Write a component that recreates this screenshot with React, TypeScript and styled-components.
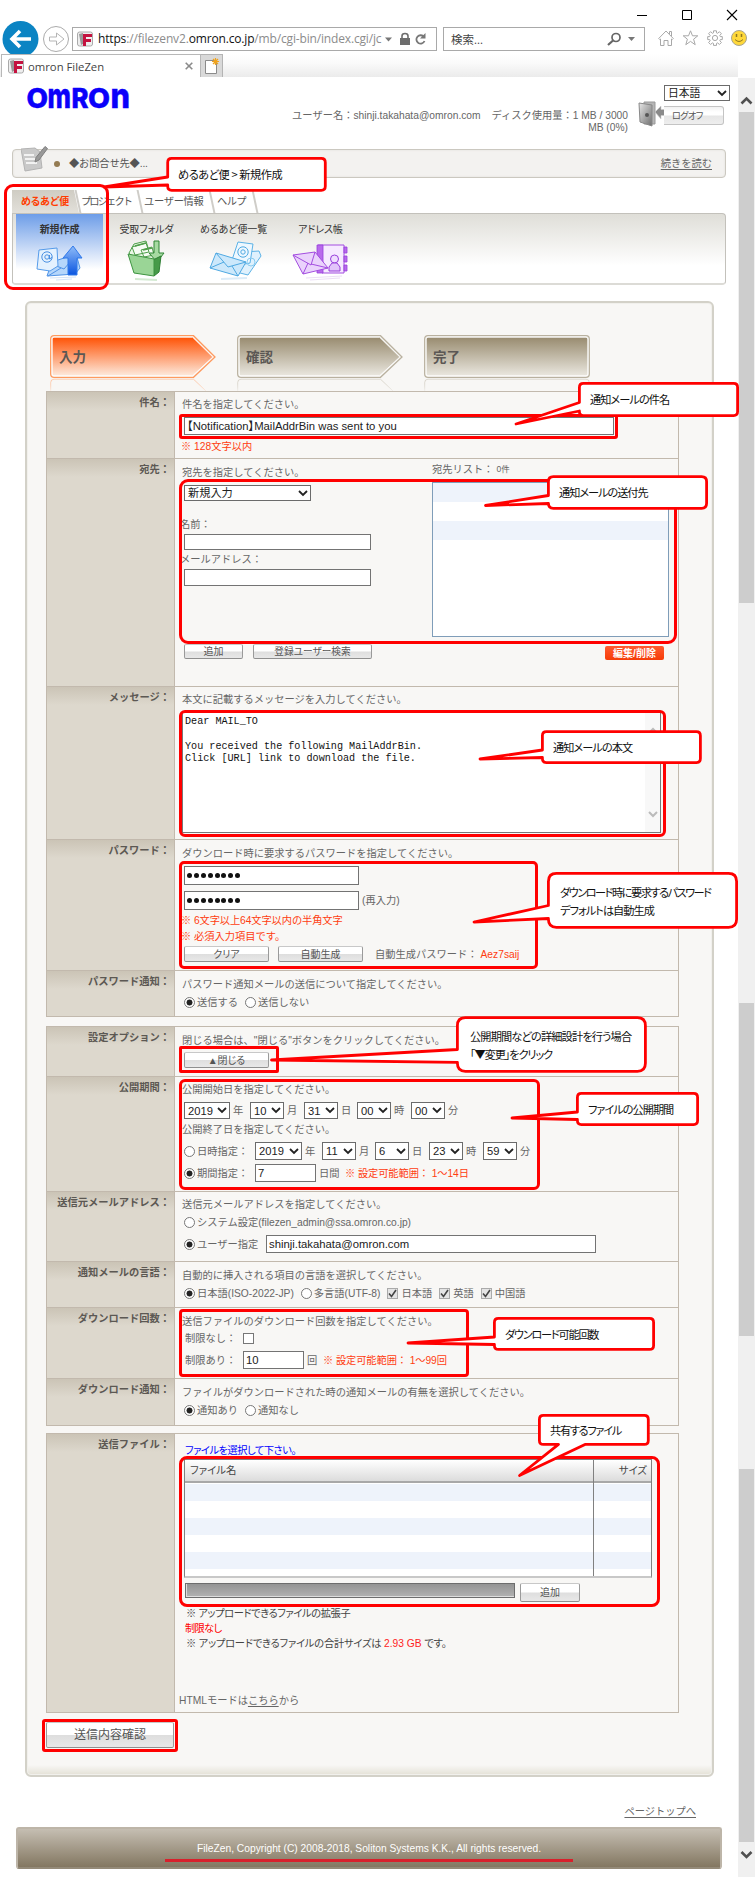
import React from "react";
import styled, { createGlobalStyle, css } from "styled-components";

const Global = createGlobalStyle`
  html, body { margin: 0; padding: 0; background: #fff; }
  *, *::before, *::after { box-sizing: border-box; }
`;

const sans = `"Liberation Sans", "Noto Sans CJK JP", sans-serif`;
const ui = `"Open Sans", "Noto Sans CJK JP", sans-serif`;

const Root = styled.div`
  position: relative;
  width: 756px;
  height: 1877px;
  overflow: hidden;
  background: #fff;
  font-family: ${sans};
  font-size: 10.25px;
  line-height: 13px;
  color: #666;
`;

/* ---------- browser frame ---------- */
const Chrome = styled.header`
  height: 77px;
  display: flex;
  flex-direction: column;
`;
const WindowButtons = styled.div`
  height: 27px;
  padding: 9px 18px 0 0;
  display: flex;
  justify-content: flex-end;
  gap: 33px;
`;
const AddressRow = styled.div`
  height: 27px;
  display: flex;
  align-items: flex-start;
`;
const NavButtons = styled.svg`
  display: block;
  flex: none;
  margin-top: -7px;
`;
const BarBox = styled.div<{ $w: number; $ml?: number; $pr?: number }>`
  flex: none;
  width: ${(p) => p.$w}px;
  height: 24px;
  margin-left: ${(p) => p.$ml || 0}px;
  border: 1px solid #a9a9a9;
  display: flex;
  align-items: center;
  padding: 0 ${(p) => p.$pr || 6}px 0 4px;
  background: #fff;
  font-family: ${ui};
  color: #8c8c8c;
`;
const Url = styled.div`
  width: 286px;
  margin-left: 5px;
  overflow: hidden;
  white-space: nowrap;
  font-size: 12px;
  letter-spacing: -0.16px;
  line-height: 20px;
  b { font-weight: 400; color: #111; }
`;
const SearchText = styled.div`
  flex: 1;
  padding-left: 3px;
  font-size: 11.5px;
  color: #444;
`;
const CaretGap = styled.div`
  display: flex;
  margin-left: 6px;
`;
const ToolIcons = styled.div`
  display: flex;
  gap: 8px;
  padding: 3px 0 0 13px;
`;
const TabRow = styled.div`
  height: 23px;
  display: flex;
  padding-left: 1px;
  background: linear-gradient(#fff, #fafafa 40%, #ebebeb);
  border-right: 18px solid #fff;
`;
const BrowserTab = styled.div`
  width: 200px;
  padding: 0 7px 0 6px;
  display: flex;
  align-items: center;
  background: #fff;
  border: 1px solid #b8b8b8;
  border-bottom: 0;
  font-family: ${ui};
  font-size: 11.3px;
  color: #444;
  span { flex: 1; margin-left: 4px; }
`;
const NewTab = styled.div`
  width: 22px;
  border: 1px solid #b4b4b4;
  border-left: 0;
  border-bottom: 0;
  background: #d9d9d9;
  padding: 2px 0 0 4px;
`;
const Favicon = () => (
  <svg width="16" height="16" viewBox="0 0 16 16">
    <rect x=".5" y="1" width="15" height="14" rx="2" fill="#eee" stroke="#aaa" />
    <path d="M2 3l4-1v11l-2 1z" fill="#999" />
    <path d="M6 3h9v3H9v2h5v3H9v4H6z" fill="#c4123f" />
  </svg>
);

/* ---------- page ---------- */
const Body = styled.div`
  display: flex;
  height: 1800px;
`;
const Page = styled.main`
  width: 738px;
  display: flex;
  flex-direction: column;
`;
const Scrollbar = styled.aside`
  width: 17px;
  background: #f0f0f0;
  margin-top: 1px;
  padding: 16px 1px 0;
  display: flex;
  flex-direction: column;
  > * { flex: none; display: block; }
`;
const Thumb = styled.div<{ $mt: number; $h: number }>`
  margin-top: ${(p) => p.$mt}px;
  height: ${(p) => p.$h}px;
  background: #cdcdcd;
`;

const Header = styled.div`
  height: 72px;
  display: flex;
  padding-left: 27px;
`;
const Logo = styled.svg`
  flex: none;
  overflow: visible;
  font-family: Inter, sans-serif;
  font-weight: 800;
`;
const UserInfo = styled.div`
  margin: 33px 0 0 149px;
  width: 349px;
  text-align: right;
  line-height: 12px;
  font-size: 10.25px;
  white-space: nowrap;
  span { margin-right: 8px; }
`;
const HeaderTools = styled.div`
  width: 95px;
  margin: 8px 0 0 10px;
  display: flex;
  flex-direction: column;
`;
const Logoff = styled.div`
  height: 26px;
  display: flex;
  align-items: center;
`;
const LogoffLabel = styled.div`
  width: 60px;
  height: 19px;
  margin: 3px 0 0 -3px;
  padding-left: 8px;
  border: 1px solid #c4c4c4;
  border-width: 1px 1px 1px 0;
  border-radius: 0 3px 3px 0;
  background: linear-gradient(#f2f2f2, #fff 30%, #fff 48%, #e6e6e6 52%, #eee);
  line-height: 18px;
  color: #555;
  font-feature-settings: "palt";
  font-size: 9.2px;
  letter-spacing: -0.7px;
`;

const Notice = styled.div`
  width: 714px;
  height: 29px;
  margin-left: 12px;
  padding: 0 13px 0 8px;
  display: flex;
  align-items: center;
  border: 1px solid #cbc8c0;
  border-radius: 4px;
  background: #f3f2f0;
  box-shadow: inset 0 0 2px #dedbd4;
  > svg { margin-top: -10px; }
`;
const Bullet = styled.i`
  width: 6px;
  height: 6px;
  margin: 0 9px 0 6px;
  border-radius: 50%;
  background: #947b52;
`;
const Link = styled.a`
  text-decoration: underline;
  text-underline-offset: 2px;
`;
const NoticeText = styled.span`
  flex: 1;
  color: #555;
  letter-spacing: -0.15px;
`;

const TabStrip = styled.nav`
  height: 23px;
  margin: 12px 0 0 12px;
  display: flex;
`;
const SectionTab = styled.div<{ $w: number; $pad: number; $active?: boolean; $ls?: number }>`
  width: ${(p) => p.$w}px;
  padding-left: ${(p) => p.$pad}px;
  line-height: 23px;
  white-space: nowrap;
  color: ${(p) => (p.$active ? "#ff3c00" : "#555")};
  font-weight: ${(p) => (p.$active ? 700 : 400)};
  font-size: ${(p) => (p.$active ? 10 : 10.25)}px;
  letter-spacing: ${(p) => p.$ls || 0}px;
  ${(p) => p.$active && css`
    background: linear-gradient(#cfccc3, #e2e0da);
    clip-path: polygon(0 0, 62px 0, 67px 100%, 0 100%);
  `}
`;
const Slant = styled.i`
  width: 2px;
  height: 23px;
  margin: 0 0 0 -2px;
  background: #cfcdc8;
  transform: skewX(12deg);
`;
const NavPanel = styled.div`
  width: 714px;
  height: 72px;
  margin-left: 12px;
  padding-left: 3px;
  display: flex;
  border: 1px solid #c3c1bb;
  border-bottom: 2px solid #dcdbd6;
  border-radius: 0 4px 4px 4px;
  background: linear-gradient(#dfded8, #fff 75%);
`;
const NavItem = styled.div<{ $active?: boolean }>`
  width: 87px;
  display: flex;
  flex-direction: column;
  align-items: center;
  padding-top: 9px;
  font-size: 10px;
  color: #333;
  white-space: nowrap;
  font-feature-settings: "palt";
  letter-spacing: -0.1px;
  ${(p) => p.$active && css`
    font-weight: 700;
    background: linear-gradient(#6d9de8, #fff 80%);
  `}
  svg { margin-top: 5px; overflow: visible; }
`;

const Panel = styled.section`
  width: 689px;
  height: 1476px;
  margin: 16px 0 0 25px;
  padding: 32px 0 0 19px;
  border: 2px solid #d3d1c8;
  border-radius: 6px;
  background: linear-gradient(#f8f7f5 1462px, #e4e1d6);
  box-shadow: inset 0 0 0 1px #f1f0ec;
`;
const Steps = styled.div`
  height: 56px;
  padding-left: 4px;
  display: flex;
  gap: 21px;
`;
const StepBox = styled.div`
  width: 166px;
  display: grid;
  > * { grid-area: 1 / 1; }
`;
const StepLabel = styled.span`
  padding: 14px 0 0 9px;
  z-index: 1;
  font-size: 13.5px;
  line-height: 18px;
  font-weight: 700;
  color: #5b5754;
`;

const Sheet = styled.div<{ $mt?: number }>`
  width: 633px;
  margin-top: ${(p) => p.$mt || 0}px;
  border: 1px solid #c2b9ad;
  border-top: 0;
`;
const RowBox = styled.div<{ $h: number }>`
  height: ${(p) => p.$h}px;
  display: grid;
  grid-template-columns: 128px 1fr;
  border-top: 1px solid #c2b9ad;
`;
const Label = styled.div`
  padding: 4px 4px 0 0;
  text-align: right;
  font-weight: 700;
  color: #5c5853;
  border-right: 1px solid #c2b9ad;
  background: linear-gradient(#cbc4b6, #ddd8cd 18px);
`;
const Cell = styled.div`
  padding-left: 7px;
  min-width: 0;
  white-space: nowrap;
`;
const Line = styled.div<{ $mt: number; $h?: number; $indent?: number }>`
  margin-top: ${(p) => p.$mt}px;
  height: ${(p) => p.$h || 13}px;
  padding-left: ${(p) => p.$indent || 0}px;
  display: flex;
  align-items: center;
`;
const Warn = styled.span<{ $ml?: number; $ls?: number }>`
  margin-left: ${(p) => p.$ml || 0}px;
  letter-spacing: ${(p) => p.$ls || 0}px;
  color: #ff3d10;
`;
const Outdent = styled.span`
  margin-left: -2px;
`;
const Field = styled.div<{ $w: number; $size?: number }>`
  flex: none;
  width: ${(p) => p.$w}px;
  height: 100%;
  padding: 0 0 0 2px;
  display: flex;
  align-items: center;
  border: 1px solid #737373;
  background: #fff;
  color: #222;
  font-size: ${(p) => p.$size || 11.3}px;
  font-feature-settings: "palt";
`;
const SelectBox = styled.div<{ $w: number; $size?: number }>`
  flex: none;
  width: ${(p) => p.$w}px;
  height: 100%;
  min-height: 16px;
  padding: 0 2px 0 3px;
  display: flex;
  align-items: center;
  justify-content: space-between;
  border: 1px solid #6b6b6b;
  background: #fff;
  color: #222;
  font-size: ${(p) => p.$size || 11.2}px;
  line-height: 14px;
`;
const Select = ({ w, size, children }: { w: number; size?: number; children: React.ReactNode }) => (
  <SelectBox $w={w} $size={size}>
    {children}
    <svg width="10" height="7" viewBox="0 0 10 7"><path d="M1 1l4 4 4-4" fill="none" stroke="#222" strokeWidth="1.8" /></svg>
  </SelectBox>
);
const Unit = styled.span<{ $w: number }>`
  flex: none;
  width: ${(p) => p.$w}px;
  padding-left: 3px;
`;
const Button = styled.div<{ $w: number; $ml?: number; $size?: number; $hot?: boolean }>`
  flex: none;
  width: ${(p) => p.$w}px;
  height: 100%;
  margin-left: ${(p) => p.$ml || 0}px;
  display: flex;
  align-items: center;
  justify-content: center;
  border: 1px solid #b0b0b0;
  border-color: #c8c8c8 #9a9a9a #8f8f8f #9a9a9a;
  border-radius: 2px;
  background: linear-gradient(#fff 48%, #dedede 52%, #e8e8e8);
  color: #555;
  font-size: ${(p) => p.$size || 10}px;
  font-feature-settings: "palt";
  ${(p) => p.$hot && css`
    border: 0;
    background: linear-gradient(#ff5a30, #f63c08);
    color: #fff;
    font-weight: 700;
  `}
`;
const Radio = styled.i<{ $on?: boolean; $ml?: number }>`
  flex: none;
  width: 11px;
  height: 11px;
  margin: 0 2px 0 ${(p) => p.$ml || 0}px;
  border: 1px solid #777;
  border-radius: 50%;
  background: ${(p) => (p.$on ? "radial-gradient(circle, #222 0 2.7px, #fff 3.3px)" : "#fff")};
`;
const Check = styled.i<{ $ml?: number; $dim?: boolean }>`
  flex: none;
  width: 11px;
  height: 11px;
  margin: 0 3px 0 ${(p) => p.$ml || 0}px;
  border: 1px solid ${(p) => (p.$dim ? "#aaa" : "#777")};
  background: ${(p) => (p.$dim ? "#e4e4e4" : "#fff")};
  display: block;
  svg { display: block; }
`;
const Ticked = ({ ml }: { ml: number }) => (
  <Check $ml={ml} $dim><svg width="9" height="9" viewBox="0 0 9 9"><path d="M1 4.5l2.5 3L8 1" fill="none" stroke="#444" strokeWidth="1.6" /></svg></Check>
);
const Fixed = styled.span<{ $w: number }>`
  flex: none;
  width: ${(p) => p.$w}px;
`;
const Dots = styled.div`
  display: flex;
  gap: 1.9px;
  i { width: 5px; height: 5px; border-radius: 50%; background: #111; }
`;
const Password = () => (
  <Field $w={175}><Dots>{Array.from({ length: 8 }, (_, i) => <i key={i} />)}</Dots></Field>
);
const Split = styled.div`
  display: grid;
  grid-template-columns: 250px 237px;
`;
const Recipients = styled.div`
  height: 155px;
  margin-top: 6px;
  border: 1px solid #7f9db9;
  background: linear-gradient(#eef3fb 19px, #fff 19px 38px, #eef3fb 38px 57px, #fff 57px);
`;
const Small = styled.span`
  font-size: 8.5px;
  margin-left: 3px;
`;
const MessageBox = styled.div`
  width: 479px;
  height: 121px;
  margin-top: 6px;
  border: 1px solid #777;
  display: flex;
  justify-content: space-between;
  background: #fff;
  color: #111;
`;
const MessageText = styled.pre`
  margin: 3px 0 0 2px;
  font: 10.13px/12.4px "Liberation Mono", monospace;
`;
const MiniScroll = styled.div`
  width: 15px;
  background: #f8f8f8;
  display: flex;
  flex-direction: column;
  justify-content: space-between;
  align-items: center;
  padding: 14px 0;
`;
const Dense = styled.span<{ $c?: string; $ls?: number }>`
  font-feature-settings: "palt";
  color: ${(p) => p.$c || "#444"};
  letter-spacing: ${(p) => p.$ls || 0}px;
`;
const FileTable = styled.div`
  width: 468px;
  height: 119px;
  margin: 2px 0 0 2px;
  display: grid;
  grid-template-columns: 408px 1fr;
  border: 1px solid #808080;
  border-bottom: 2px solid #c8c8c8;
`;
const FileCol = styled.div<{ $right?: boolean }>`
  border-left: ${(p) => (p.$right ? "1px solid #808080" : "0")};
  text-align: ${(p) => (p.$right ? "right" : "left")};
  background: linear-gradient(#eef3fb 17px, #fff 17px 34px, #eef3fb 34px 51px, #fff 51px 68px, #eef3fb 68px 85px, #fff 85px) 0 24px no-repeat #fff;
`;
const FileHead = styled.div`
  height: 23px;
  padding: 0 4px 0 5px;
  line-height: 22px;
  border-bottom: 2px solid #a8a8a8;
  background: linear-gradient(#fff, #dcdcdc);
  color: #444;
  font-size: 10.4px;
  font-feature-settings: "palt";
`;
const Progress = styled.div`
  width: 330px;
  height: 15px;
  align-self: flex-start;
  border: 1px solid #6d6d6d;
  box-shadow: inset 1px -1px 0 #ddd;
  background: linear-gradient(#949494, #b2b2b2);
`;
const HtmlMode = styled.span`
  margin-left: -3px;
`;
const Submit = styled.div`
  display: flex;
  height: 26px;
  margin-top: 9px;
`;
const TopLink = styled.div`
  height: 13px;
  margin: 28px 42px 9px 0;
  text-align: right;
`;
const Footer = styled.footer`
  width: 706px;
  height: 42px;
  margin-left: 16px;
  padding-top: 1px;
  display: flex;
  align-items: center;
  justify-content: center;
  border: 2px solid #bdb5a8;
  border-bottom-color: #948a78;
  border-radius: 3px;
  background: linear-gradient(#c5beb2, #837761);
  color: #fff;
  font-size: 10.25px;
`;

/* ---------- annotations ---------- */
const Mark = styled.div<{ $b: [number, number, number, number]; $r: number }>`
  position: absolute;
  left: ${(p) => p.$b[0]}px;
  top: ${(p) => p.$b[1]}px;
  width: ${(p) => p.$b[2] - p.$b[0]}px;
  height: ${(p) => p.$b[3] - p.$b[1]}px;
  border: 3px solid #f00;
  border-radius: ${(p) => p.$r}px;
`;
const Bubbles = styled.svg`
  position: absolute;
  left: 0;
  top: 0;
`;
const BubbleText = styled.div<{ $x: number; $y: number; $ls: number }>`
  position: absolute;
  left: ${(p) => p.$x}px;
  top: ${(p) => p.$y - 9}px;
  line-height: 18px;
  font-family: "Noto Sans CJK JP", sans-serif;
  font-size: 11.2px;
  font-feature-settings: "palt";
  letter-spacing: ${(p) => p.$ls}px;
  color: #111;
  white-space: pre;
`;
const Underline = styled.div`
  position: absolute;
  left: 165px;
  top: 1859px;
  width: 408px;
  height: 3px;
  background: #d8202c;
`;

type Callout = {
  box: [number, number, number, number];
  tip: [number, number];
  base: [number, number];
  bottom?: boolean;
  r: number;
  lines: [string, number][];
  at: [number, number];
};
const callouts: Callout[] = [
  { box: [167.7, 158.4, 325.3, 190.3], tip: [104, 187], base: [177, 185], r: 4, lines: [["めるあど便 > 新規作成", -0.45]], at: [178, 174] },
  { box: [579.4, 383.4, 737.6, 415.6], tip: [516, 424], base: [402.5, 411], r: 4, lines: [["通知メールの件名", -0.95]], at: [590, 399] },
  { box: [548.4, 476.7, 706.6, 508.3], tip: [485.5, 505.5], base: [495.5, 503.5], r: 5, lines: [["通知メールの送付先", -1.05]], at: [559, 492] },
  { box: [542.4, 731.7, 700.4, 762.6], tip: [480, 759], base: [750, 757.5], r: 4, lines: [["通知メールの本文", -0.95]], at: [553, 747] },
  { box: [548.4, 873.4, 736.6, 927.3], tip: [474, 922], base: [905.5, 918.5], r: 8, lines: [["ダウンロード時に要求するパスワード", -1.5], ["デフォルトは自動生成", -0.95]], at: [560, 892] },
  { box: [457.4, 1017.7, 645.4, 1071.3], tip: [271.5, 1060], base: [1049.5, 1062.3], r: 8, lines: [["公開期間などの詳細設計を行う場合", -0.85], ["「▼変更」をクリック", -1.1]], at: [470, 1036] },
  { box: [577.4, 1093.4, 697.6, 1124.6], tip: [512, 1118], base: [1112, 1119.5], r: 4, lines: [["ファイルの公開期間", -1]], at: [588, 1109] },
  { box: [494.4, 1318.4, 653.6, 1349.4], tip: [408, 1343], base: [1337, 1344.5], r: 4, lines: [["ダウンロード可能回数", -1.25]], at: [505, 1334] },
  { box: [539.4, 1415.4, 648.3, 1444.4], tip: [519.5, 1475.5], base: [558.5, 585], bottom: true, r: 4, lines: [["共有するファイル", -1.3]], at: [550, 1430] },
];
const bubblePath = ({ box: [l, t, r, b], tip, base, bottom, r: q }: Callout) =>
  `M${l + q} ${t}H${r - q}Q${r} ${t} ${r} ${t + q}V${b - q}Q${r} ${b} ${r - q} ${b}` +
  (bottom ? `H${base[1]}L${tip[0]} ${tip[1]}L${base[0]} ${b}` : "") +
  `H${l + q}Q${l} ${b} ${l} ${b - q}` +
  (bottom ? "" : `V${base[1]}L${tip[0]} ${tip[1]}L${l} ${base[0]}`) +
  `V${t + q}Q${l} ${t} ${l + q} ${t}Z`;

const marks: { b: [number, number, number, number]; r: number }[] = [
  { b: [4, 184, 109, 290], r: 9 },
  { b: [179, 414, 618, 439], r: 3 },
  { b: [179, 479, 677, 644], r: 9 },
  { b: [179, 710, 666, 837], r: 6 },
  { b: [179, 861, 538, 969], r: 5 },
  { b: [179, 1046, 279, 1073], r: 2 },
  { b: [179, 1079, 540, 1190], r: 6 },
  { b: [179, 1309, 469, 1377], r: 4 },
  { b: [179, 1456, 660, 1607], r: 8 },
  { b: [42, 1719, 178, 1752], r: 3 },
];

/* ---------- small pieces ---------- */
const Step = ({ id, label, top, low, line, arrow }: { id: string; label: string; top: string; low: string; line: string; arrow?: boolean }) => {
  const d = arrow ? "M4 .7H143.5L165 22L143.5 42.3H4Q.7 42.3 .7 39V4Q.7 .7 4 .7Z" : "M4 .7H162Q165.3 .7 165.3 4V39Q165.3 42.3 162 42.3H4Q.7 42.3 .7 39V4Q.7 .7 4 .7Z";
  const inner = arrow ? "M4 2.2H142.6L162.8 22L142.6 40.8H4Q2.2 40.8 2.2 39V4Q2.2 2.2 4 2.2Z" : "M4 2.2H162Q163.8 2.2 163.8 4V39Q163.8 40.8 162 40.8H4Q2.2 40.8 2.2 39V4Q2.2 2.2 4 2.2Z";
  return (
    <StepBox>
      <svg width="166" height="56" viewBox="0 0 166 56">
        <defs>
          <linearGradient id={id} x2="0" y2="1"><stop stopColor={top} /><stop offset="1" stopColor={low} /></linearGradient>
          <linearGradient id={id + "f"} x2="0" y2="1"><stop offset=".68" stopColor="#f8f7f5" /><stop offset="1" stopColor={line} stopOpacity=".45" /></linearGradient>
        </defs>
        <path d={d} fill="none" stroke={`url(#${id}f)`} transform="translate(0 86.5) scale(1 -1)" />
        <path d={d} fill="#f8f7f5" stroke={line} strokeWidth="1.3" />
        <path d={inner} fill={`url(#${id})`} stroke="#fff" strokeOpacity=".85" />
      </svg>
      <StepLabel>{label}</StepLabel>
    </StepBox>
  );
};
const Row = ({ h, label, children }: { h: number; label: string; children: React.ReactNode }) => (
  <RowBox $h={h}>
    <Label>{label}：</Label>
    <Cell>{children}</Cell>
  </RowBox>
);

const IconCompose = () => (
  <svg width="48" height="40" viewBox="0 0 48 40">
    <defs><linearGradient id="up" x2="0" y2="1"><stop stopColor="#8fbcf8" /><stop offset="1" stopColor="#0b55e0" /></linearGradient></defs>
    <path d="M16 21l24-8 4 14-5 6-28 2z" fill="#b5d6fb" stroke="#4f92e6" />
    <path d="M13 22l15 6 12-14M12 35l13-8" fill="none" stroke="#4f92e6" />
    <path d="M3 9l18-2 1 18-8 5-13-2z" fill="#e4f1fe" stroke="#559bea" />
    <circle cx="11" cy="16" r="5.200" fill="none" stroke="#4a90e2" /><path d="M13.500 14v4q2 0 2-2" fill="none" stroke="#4a90e2" /><circle cx="11" cy="16" r="2.200" fill="none" stroke="#4a90e2" />
    <path d="M37 5l9 12h-5v17h-9V17h-5z" fill="url(#up)" stroke="#2f78ea" />
    <path d="M14 37l26-1M20 39l16-1" stroke="#d5e4f8" />
  </svg>
);
const IconFolder = () => (
  <svg width="48" height="40" viewBox="0 0 48 40">
    <path d="M6 12l5-9 12-3 3 10 9 2-1 14-20-4z" fill="#eaf7e6" stroke="#4f9f4b" />
    <path d="M9 6l14-4 3 9-14 3zM18 9l11-3 2 8-10 2z" fill="#f6fcf4" stroke="#4f9f4b" />
    <path d="M12 5l11-3M20 9l9-2" stroke="#4f9f4b" strokeWidth="1.600" />
    <path d="M31 0h5v12h5l-7 9-8-9h5z" fill="#a6daa2" stroke="#2f8434" />
    <path d="M30 19l8-4-2 16-5 4z" fill="#469a48" stroke="#2f7f34" />
    <path d="M5 13l26 5v17l-20-3z" fill="#9ad596" stroke="#3d9440" />
    <path d="M12 38l22 1" stroke="#d4ead2" strokeWidth="2" />
  </svg>
);
const IconMails = () => (
  <svg width="54" height="40" viewBox="0 0 54 40">
    <path d="M36 11l16-1 2 5-13 19-12-3z" fill="#dff1fd" stroke="#5cb2e6" />
    <path d="M31 1l15 2-3 19-10 2-8-5z" fill="#eef8ff" stroke="#5cb2e6" />
    <circle cx="36" cy="11" r="5.200" fill="none" stroke="#4fa9e2" /><circle cx="36" cy="11" r="2.200" fill="none" stroke="#4fa9e2" />
    <circle cx="44" cy="21" r="4" fill="none" stroke="#8accf0" />
    <path d="M9 12l30 9-8 14L3 27z" fill="#cce8fb" stroke="#4fa9e2" />
    <path d="M9 12l12 14 18-5M3 27l14-6M31 35l-6-10" fill="none" stroke="#4fa9e2" />
    <path d="M14 38l26-1" stroke="#dcecf8" strokeWidth="2" />
  </svg>
);
const IconBook = () => (
  <svg width="58" height="40" viewBox="0 0 58 40">
    <path d="M26 4h26v28H30z" fill="#f6eaff" stroke="#a34de0" />
    <path d="M25 4h6v28h-6zM52 6h3v6h-3zm0 9h3v6h-3zm0 9h3v6h-3z" fill="#b86aec" stroke="#983fda" strokeWidth=".8" />
    <circle cx="42.500" cy="18" r="4" fill="#efdcff" stroke="#983fda" />
    <path d="M37 30v-4l3-4h5l3 4v4z" fill="#e2c4fa" stroke="#983fda" />
    <path d="M1 14l22-3 13 16-25 6z" fill="#ead2fc" stroke="#a34de0" />
    <path d="M1 14l18 10 4-13M11 33l5-11M36 27l-17-4" fill="none" stroke="#a34de0" />
    <path d="M14 37l36-2M18 39l30-2" stroke="#ecdff6" />
  </svg>
);
const Caret = () => <svg width="7" height="4" viewBox="0 0 7 4"><path d="M0 0h7L3.500 4z" fill="#777" /></svg>;

export default function App() {
  return (
    <Root>
      <Global />
      <Chrome>
        <WindowButtons>
          <svg width="12" height="12"><path d="M1 6.500h10" stroke="#000" /></svg>
          <svg width="12" height="12"><path d="M1.500 1.500h9v9h-9z" fill="none" stroke="#000" /></svg>
          <svg width="12" height="12"><path d="M1 1l10 10M11 1L1 11" stroke="#000" strokeWidth="1.100" /></svg>
        </WindowButtons>
        <AddressRow>
          <NavButtons width="72" height="34" viewBox="0 20 72 34">
            <circle cx="20.500" cy="39" r="18" fill="#0b84c3" />
            <path d="M31 39H12.500M20 31l-8 8 8 8" fill="none" stroke="#fff" strokeWidth="3.600" />
            <circle cx="56" cy="39" r="12.500" fill="#fff" stroke="#ababab" />
            <path d="M49.500 37h7v-4l7.500 6-7.500 6v-4h-7z" fill="#fff" stroke="#b5b5b5" />
          </NavButtons>
          <BarBox $w={365}>
            <Favicon />
            <Url><b>https</b>://filezenv2.<b>omron.co.jp</b>/mb/cgi-bin/index.cgi/jc</Url>
            <svg width="42" height="14" viewBox="0 0 42 14">
              <path d="M1 5.500h7l-3.500 4z" fill="#777" />
              <rect x="16" y="6" width="10" height="7" fill="#6d6d6d" /><path d="M18 7V4q0-2.500 3-2.500T24 4v3" fill="none" stroke="#6d6d6d" strokeWidth="1.600" />
              <path d="M40 5a4.200 4.200 0 1 0 .5 4" fill="none" stroke="#777" strokeWidth="1.800" /><path d="M41.500 1v5.500H36z" fill="#777" />
            </svg>
          </BarBox>
          <BarBox $w={202} $ml={6} $pr={9}>
            <SearchText>検索...</SearchText>
            <svg width="15" height="14" viewBox="0 0 15 14"><circle cx="9" cy="5.500" r="4" fill="none" stroke="#666" strokeWidth="1.700" /><path d="M6 8.500L1 13" stroke="#666" strokeWidth="2.200" /></svg>
            <CaretGap><Caret /></CaretGap>
          </BarBox>
          <ToolIcons>
            <svg width="16" height="16" viewBox="0 0 16 16" fill="#fff" stroke="#a8a8a8"><path d="M.7 8.500L8 1l7.300 7.500-1 1L13.500 9v6.500h-3.500v-5H6v5H2.500V9l-.8.500zM11.500 4V1.500h2V6" /></svg>
            <svg width="17" height="16" viewBox="0 0 17 16" fill="#fff" stroke="#a8a8a8"><path d="M8.500.8l2 5h5.300l-4.200 3.400 1.600 5.500-4.700-3.300-4.700 3.300 1.600-5.500L1.200 5.800h5.300z" /></svg>
            <svg width="16" height="16" viewBox="0 0 16 16" fill="none" stroke="#a8a8a8"><path d="M6.500 2.800V.8h3v2l1.200.5 1.700-1.600 2 2-1.600 1.700.5 1.200h2v3h-2l-.5 1.200 1.600 1.700-2 2-1.700-1.600-1.200.5v2h-3v-2l-1.200-.5-1.700 1.600-2-2 1.600-1.700-.5-1.200h-2v-3h2l.5-1.200-1.600-1.700 2-2 1.700 1.600z" /><circle cx="8" cy="8" r="2.600" /></svg>
            <svg width="16" height="16" viewBox="0 0 16 16"><circle cx="8" cy="8" r="7.500" fill="#ffd83a" stroke="#a9a58e" /><path d="M5.500 4v3M10.500 4v3" stroke="#8f7820" strokeWidth="1.500" /><path d="M4 9.500q4 4 8 0" fill="none" stroke="#8f7820" /></svg>
          </ToolIcons>
        </AddressRow>
        <TabRow>
          <BrowserTab>
            <Favicon />
            <span>omron FileZen</span>
            <svg width="8" height="8" viewBox="0 0 8 8"><path d="M.7.700l6.600 6.600M7.300.700L.7 7.300" stroke="#8a8a8a" strokeWidth="1.600" /></svg>
          </BrowserTab>
          <NewTab>
            <svg width="15" height="17" viewBox="0 0 15 17"><path d="M.5 3.500h11v13H.5z" fill="#fff" stroke="#8b8b8b" /><path d="M10.500 1v7M7 4.500h7M8 2l5 5M13 2L8 7" stroke="#f0a31c" strokeWidth="1.200" /></svg>
          </NewTab>
        </TabRow>
      </Chrome>

      <Body>
        <Page>
          <Header>
            <Logo width="103" height="52" viewBox="0 0 103 52" fill="#0a00fa" stroke="#0a00fa" strokeWidth=".5">
              <text x="-.5" y="30.500" fontSize="27" textLength="21.500" lengthAdjust="spacingAndGlyphs">O</text>
              <text x="20.500" y="30.500" fontSize="35" textLength="23.500" lengthAdjust="spacingAndGlyphs">m</text>
              <text x="44.500" y="30.500" fontSize="27" textLength="17" lengthAdjust="spacingAndGlyphs">R</text>
              <text x="61" y="30.500" fontSize="27" textLength="22" lengthAdjust="spacingAndGlyphs">O</text>
              <text x="83.500" y="30.500" fontSize="35" textLength="19.500" lengthAdjust="spacingAndGlyphs">n</text>
            </Logo>
            <UserInfo><span>ユーザー名：shinji.takahata@omron.com</span> ディスク使用量：1 MB / 3000<br />MB (0%)</UserInfo>
            <HeaderTools>
              <Line $mt={0} $h={16} $indent={26}><Select w={66} size={10.8}>日本語</Select></Line>
              <Logoff>
                <svg width="29" height="26" viewBox="0 0 29 26">
                  <defs><linearGradient id="door" x2="1" y2="1"><stop stopColor="#e6e6e6" /><stop offset="1" stopColor="#6e6e6e" /></linearGradient></defs>
                  <path d="M6 1h11v22H6z" fill="#b5b5b5" stroke="#999" /><path d="M1 2l13 2v21L2 21z" fill="url(#door)" stroke="#888" />
                  <circle cx="9" cy="14" r="2" fill="#555" /><path d="M17 11l6-6v3.500h5v6h-5V18z" fill="#8a8a8a" stroke="#ccc" strokeWidth=".6" />
                </svg>
                <LogoffLabel>ログオフ</LogoffLabel>
              </Logoff>
            </HeaderTools>
          </Header>

          <Notice>
            <svg width="27" height="26" viewBox="0 0 27 26">
              <path d="M0 3l14-1 5 4 2 16-17 3z" fill="#c9c9c9" stroke="#b3b3b3" /><path d="M3 9h10M4 13h11M5 17h11" stroke="#fff" strokeWidth="1.300" />
              <path d="M24 .5l2.500 2L18 14l-4 2 1-4.500z" fill="#999" stroke="#7e7e7e" />
            </svg>
            <Bullet />
            <NoticeText>◆お問合せ先◆...</NoticeText>
            <Link>続きを読む</Link>
          </Notice>

          <TabStrip>
            <SectionTab $w={67} $pad={9} $ls={-0.45} $active>めるあど便</SectionTab><Slant />
            <SectionTab $w={62} $pad={2} $ls={-1.9}>プロジェクト</SectionTab><Slant />
            <SectionTab $w={72} $pad={3} $ls={-0.3}>ユーザー情報</SectionTab><Slant />
            <SectionTab $w={43} $pad={4} $ls={-0.6}>ヘルプ</SectionTab><Slant />
          </TabStrip>
          <NavPanel>
            <NavItem $active>新規作成<IconCompose /></NavItem>
            <NavItem>受取フォルダ<IconFolder /></NavItem>
            <NavItem>めるあど便一覧<IconMails /></NavItem>
            <NavItem>アドレス帳<IconBook /></NavItem>
          </NavPanel>

          <Panel>
            <Steps>
              <Step id="s1" label="入力" top="#ff5205" low="#fdeadd" line="#ff9a5e" arrow />
              <Step id="s2" label="確認" top="#988b6f" low="#eae7df" line="#b9b19f" arrow />
              <Step id="s3" label="完了" top="#988b6f" low="#eae7df" line="#b9b19f" />
            </Steps>

            <Sheet>
              <Row h={67} label="件名">
                <Line $mt={6}>件名を指定してください。</Line>
                <Line $mt={6} $h={18} $indent={2}><Field $w={430}>【Notification】MailAddrBin was sent to you</Field></Line>
                <Line $mt={5}><Warn $ml={-1}>※ 128文字以内</Warn></Line>
              </Row>
              <Row h={228} label="宛先">
                <Split>
                  <div>
                    <Line $mt={7}>宛先を指定してください。</Line>
                    <Line $mt={6} $h={16} $indent={2}><Select w={127}>新規入力</Select></Line>
                    <Line $mt={17}><Outdent>名前：</Outdent></Line>
                    <Line $mt={3} $h={16} $indent={2}><Field $w={187} /></Line>
                    <Line $mt={3}><Outdent>メールアドレス：</Outdent></Line>
                    <Line $mt={3} $h={17} $indent={2}><Field $w={187} /></Line>
                    <Line $mt={58} $h={15} $indent={2}><Button $w={59}>追加</Button><Button $w={119} $ml={10} $size={9.7}>登録ユーザー検索</Button></Line>
                  </div>
                  <div>
                    <Line $mt={4}>宛先リスト：<Small>0件</Small></Line>
                    <Recipients />
                    <Line $mt={9} $h={14} $indent={173}><Button $w={59} $hot>編集/削除</Button></Line>
                  </div>
                </Split>
              </Row>
              <Row h={153} label="メッセージ">
                <Line $mt={6}>本文に記載するメッセージを入力してください。</Line>
                <MessageBox>
                  <MessageText>{"Dear MAIL_TO\n\nYou received the following MailAddrBin.\nClick [URL] link to download the file."}</MessageText>
                  <MiniScroll>
                    <svg width="10" height="7"><path d="M1 6l4-4 4 4" fill="none" stroke="#bbb" strokeWidth="2" /></svg>
                    <svg width="10" height="7"><path d="M1 1l4 4 4-4" fill="none" stroke="#bbb" strokeWidth="2" /></svg>
                  </MiniScroll>
                </MessageBox>
              </Row>
              <Row h={131} label="パスワード">
                <Line $mt={7}>ダウンロード時に要求するパスワードを指定してください。</Line>
                <Line $mt={6} $h={19} $indent={2}><Password /></Line>
                <Line $mt={6} $h={19} $indent={2}><Password /><Unit $w={50}>(再入力)</Unit></Line>
                <Line $mt={4}><Warn $ml={-1} $ls={-0.1}>※ 6文字以上64文字以内の半角文字</Warn></Line>
                <Line $mt={3}><Warn $ml={-1}>※ 必須入力項目です。</Warn></Line>
                <Line $mt={3} $h={16} $indent={2}>
                  <Button $w={85}>クリア</Button><Button $w={85} $ml={9}>自動生成</Button>
                  <Fixed $w={12} />自動生成パスワード：<Warn $ml={3}>Aez7saij</Warn>
                </Line>
              </Row>
              <Row h={46} label="パスワード通知">
                <Line $mt={7}>パスワード通知メールの送信について指定してください。</Line>
                <Line $mt={5} $indent={2}><Radio $on />送信する<Radio $ml={7} />送信しない</Line>
              </Row>
            </Sheet>

            <Sheet $mt={9}>
              <Row h={50} label="設定オプション">
                <Line $mt={7}>閉じる場合は、"閉じる"ボタンをクリックしてください。</Line>
                <Line $mt={5} $h={16} $indent={2}><Button $w={85}>▲閉じる</Button></Line>
              </Row>
              <Row h={115} label="公開期間">
                <Line $mt={6}>公開開始日を指定してください。</Line>
                <Line $mt={6} $h={17} $indent={2}>
                  <Select w={46}>2019</Select><Unit $w={20}>年</Unit>
                  <Select w={34}>10</Select><Unit $w={20}>月</Unit>
                  <Select w={34}>31</Select><Unit $w={19}>日</Unit>
                  <Select w={34}>00</Select><Unit $w={20}>時</Unit>
                  <Select w={34}>00</Select><Unit $w={20}>分</Unit>
                </Line>
                <Line $mt={4}>公開終了日を指定してください。</Line>
                <Line $mt={6} $h={18} $indent={2}>
                  <Radio /><Fixed $w={58}>日時指定：</Fixed>
                  <Select w={47}>2019</Select><Unit $w={20}>年</Unit>
                  <Select w={34}>11</Select><Unit $w={19}>月</Unit>
                  <Select w={34}>6</Select><Unit $w={20}>日</Unit>
                  <Select w={34}>23</Select><Unit $w={20}>時</Unit>
                  <Select w={34}>59</Select><Unit $w={20}>分</Unit>
                </Line>
                <Line $mt={4} $h={18} $indent={2}>
                  <Radio $on /><Fixed $w={58}>期間指定：</Fixed>
                  <Field $w={61}>7</Field><Unit $w={29}>日間</Unit><Warn $ls={-0.1}>※ 設定可能範囲： 1～14日</Warn>
                </Line>
              </Row>
              <Row h={70} label="送信元メールアドレス">
                <Line $mt={6}>送信元メールアドレスを指定してください。</Line>
                <Line $mt={5} $indent={2}><Radio />システム設定(filezen_admin@ssa.omron.co.jp)</Line>
                <Line $mt={6} $h={18} $indent={2}><Radio $on /><Fixed $w={69}>ユーザー指定</Fixed><Field $w={330}>shinji.takahata@omron.com</Field></Line>
              </Row>
              <Row h={46} label="通知メールの言語">
                <Line $mt={7}>自動的に挿入される項目の言語を選択してください。</Line>
                <Line $mt={5} $indent={2}>
                  <Radio $on />日本語(ISO-2022-JP)<Radio $ml={7} />多言語(UTF-8)
                  <Ticked ml={7} />日本語<Ticked ml={7} />英語<Ticked ml={7} />中国語
                </Line>
              </Row>
              <Row h={71} label="ダウンロード回数">
                <Line $mt={7}>送信ファイルのダウンロード回数を指定してください。</Line>
                <Line $mt={4} $indent={3}><Fixed $w={58}>制限なし：</Fixed><Check /></Line>
                <Line $mt={6} $h={18} $indent={3}><Fixed $w={58}>制限あり：</Fixed><Field $w={61}>10</Field><Unit $w={19}>回</Unit><Warn $ls={-0.1}>※ 設定可能範囲： 1～99回</Warn></Line>
              </Row>
              <Row h={47} label="ダウンロード通知">
                <Line $mt={7}>ファイルがダウンロードされた時の通知メールの有無を選択してください。</Line>
                <Line $mt={5} $indent={2}><Radio $on />通知あり<Radio $ml={7} />通知なし</Line>
              </Row>
            </Sheet>

            <Sheet $mt={7}>
              <Row h={279} label="送信ファイル">
                <Line $mt={10} $indent={3}><Dense $c="#00f" $ls={-0.5}>ファイルを選択して下さい。</Dense></Line>
                <FileTable>
                  <FileCol><FileHead>ファイル名</FileHead></FileCol>
                  <FileCol $right><FileHead>サイズ</FileHead></FileCol>
                </FileTable>
                <Line $mt={5} $h={19} $indent={3}><Progress /><Button $w={60} $ml={5}>追加</Button></Line>
                <Line $mt={4} $h={14} $indent={4}><Dense $ls={-0.4}>※ アップロードできるファイルの拡張子</Dense></Line>
                <Line $mt={1} $h={14} $indent={3}><Dense $c="#f00" $ls={-0.7}>制限なし</Dense></Line>
                <Line $mt={1} $h={14} $indent={4}><Dense $ls={-0.2}>※ アップロードできるファイルの合計サイズは <Dense $c="#f22">2.93 GB</Dense> です。</Dense></Line>
                <Line $mt={44}><HtmlMode>HTMLモードは<Link>こちら</Link>から</HtmlMode></Line>
              </Row>
            </Sheet>
            <Submit><Button $w={128} $size={12}>送信内容確認</Button></Submit>
          </Panel>

          <TopLink><Link>ページトップへ</Link></TopLink>
          <Footer>FileZen, Copyright (C) 2008-2018, Soliton Systems K.K., All rights reserved.</Footer>
        </Page>
        <Scrollbar>
          <svg width="15" height="18"><path d="M2.500 9.500l5-5 5 5" fill="none" stroke="#505050" strokeWidth="2.600" /></svg>
          <Thumb $mt={0} $h={491} />
          <Thumb $mt={400} $h={333} />
          <Thumb $mt={133} $h={373} />
          <svg width="15" height="24"><path d="M2.500 10l5 5 5-5" fill="none" stroke="#505050" strokeWidth="2.600" /></svg>
        </Scrollbar>
      </Body>

      {marks.map((m, i) => <Mark key={i} $b={m.b} $r={m.r} />)}
      <Bubbles width="756" height="1877">
        {callouts.map((c, i) => <path key={i} d={bubblePath(c)} fill="#fff" stroke="#f00" strokeWidth="2.800" strokeLinejoin="round" />)}
      </Bubbles>
      {callouts.flatMap((c) => c.lines.map(([text, ls], n) => (
        <BubbleText key={text} $x={c.at[0]} $y={c.at[1] + n * 18} $ls={ls}>{text}</BubbleText>
      )))}
      <Underline />
    </Root>
  );
}
